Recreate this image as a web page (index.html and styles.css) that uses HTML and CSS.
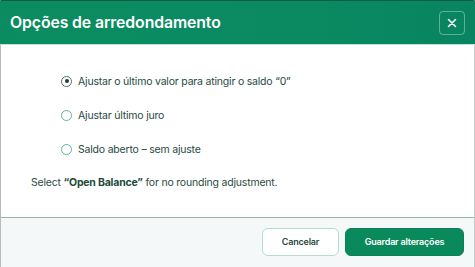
FILE: index.html
```html
<!DOCTYPE html>
<html lang="pt">
<head>
<meta charset="utf-8">
<link rel="stylesheet" href="styles.css">
</head>
<body>
<div class="dialog">
  <div class="header">
    <h1 class="title">Opções de arredondamento</h1>
    <button class="close" aria-label="Fechar">
      <svg width="10" height="10" viewBox="0 0 10 10"><path d="M1.5 1.5L8.5 8.5M8.5 1.5L1.5 8.5" stroke="#fff" stroke-width="1.6" stroke-linecap="round"/></svg>
    </button>
  </div>
  <div class="body">
    <div class="options">
      <label class="option"><span class="radio checked"></span>Ajustar o último valor para atingir o saldo “0”</label>
      <label class="option"><span class="radio"></span>Ajustar último juro</label>
      <label class="option"><span class="radio"></span>Saldo aberto – sem ajuste</label>
    </div>
    <p class="note">Select <b>“Open Balance”</b> for no rounding adjustment.</p>
  </div>
  <div class="footer">
    <button class="btn cancel">Cancelar</button>
    <button class="btn save">Guardar alterações</button>
  </div>
</div>
</body>
</html>
```

FILE: styles.css
```css
* { box-sizing: border-box; }
html, body { margin: 0; padding: 0; }
body {
  width: 475px;
  height: 267px;
  overflow: hidden;
  font-family: Inter, "Noto Sans", sans-serif;
  background: #fff;
}
.dialog {
  width: 475px;
  height: 267px;
  display: flex;
  flex-direction: column;
  border-left: 1px solid #b5bcb9;
  border-right: 1px solid #c7cdca;
  border-top: 1px solid #0d5c4a;
}
.header {
  height: 44px;
  flex: none;
  display: flex;
  align-items: center;
  justify-content: space-between;
  padding: 0 10px 0 10px;
  background: linear-gradient(90deg, #0a8c60 0%, #0b8a61 60%, #088560 100%);
  border-bottom: 1px solid #b9e6d6;
  margin-left: -1px;
  margin-right: -1px;
}
.title {
  margin: 0;
  color: #fff;
  font-size: 15.8px;
  font-weight: 600;
  letter-spacing: -0.1px;
}
.close {
  width: 26px;
  height: 24px;
  border: 1px solid rgba(255,255,255,0.35);
  border-radius: 4px;
  background: transparent;
  display: flex;
  align-items: center;
  justify-content: center;
  padding: 0;
}
.body {
  flex: 1;
  padding: 28px 30px 0 30px;
}
.options {
  display: flex;
  flex-direction: column;
  gap: 18px;
  padding-left: 30px;
}
.option {
  display: flex;
  align-items: center;
  gap: 6px;
  height: 16px;
  font-size: 10.5px;
  letter-spacing: -0.2px;
  color: #284a3f;
}
.radio {
  width: 11px;
  height: 11px;
  border-radius: 50%;
  border: 1.2px solid #5db59a;
  flex: none;
  position: relative;
}
.radio.checked {
  border-color: #55706a;
}
.radio.checked::after {
  content: "";
  position: absolute;
  left: 50%;
  top: 50%;
  width: 4px;
  height: 4px;
  margin: -2px 0 0 -2px;
  border-radius: 50%;
  background: #1d3d33;
}
.note {
  margin: 18px 0 0 0;
  line-height: 16px;
  font-size: 10.5px;
  letter-spacing: -0.2px;
  color: #2c4b42;
}
.note b {
  font-weight: 700;
  color: #1e4a3b;
}
.footer {
  height: 50px;
  flex: none;
  border-top: 1px solid #8fb8a8;
  background: #f5f8f9;
  display: flex;
  justify-content: flex-end;
  align-items: center;
  gap: 6px;
  padding: 0 10px 2px 0;
}
.btn {
  height: 28px;
  border-radius: 6px;
  font-family: Inter, "Noto Sans", sans-serif;
  font-size: 9px;
  font-weight: 600;
  letter-spacing: -0.2px;
  padding: 0;
}
.cancel {
  width: 77px;
  background: #fff;
  border: 1px solid #b6dbd0;
  color: #2b4a40;
}
.save {
  width: 119px;
  background: #0a8a5c;
  border: 1px solid #0a8158;
  color: #fff;
}
```
